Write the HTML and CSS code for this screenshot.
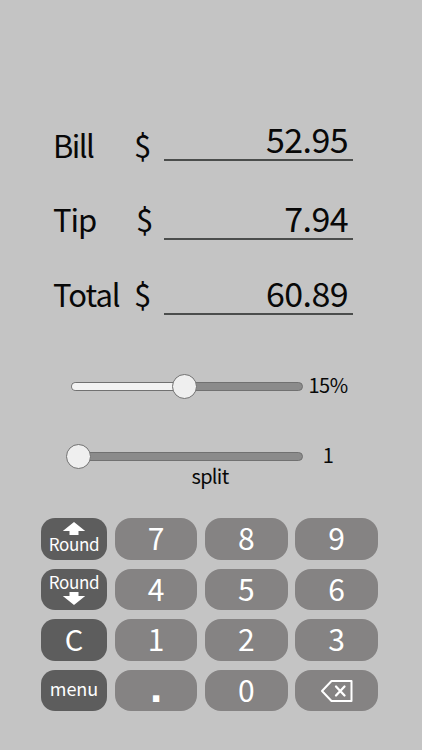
FILE: index.html
```html
<!DOCTYPE html>
<html lang="en">
<head>
  <meta charset="UTF-8">
  <meta name="viewport" content="width=device-width, initial-scale=1.0">
  <title>Tip Calculator</title>
  <link rel="stylesheet" href="styles.css">
</head>
<body>
  <div class="container">
    <div class="amounts">
      <div class="amount-row bill">
        <span class="label">Bill</span>
        <span class="currency">$</span>
        <span class="amount">52.95</span>
      </div>
      <div class="amount-row tip">
        <span class="label">Tip</span>
        <span class="currency">$</span>
        <span class="amount">7.94</span>
      </div>
      <div class="amount-row total">
        <span class="label">Total</span>
        <span class="currency">$</span>
        <span class="amount">60.89</span>
      </div>
    </div>

    <div class="sliders">
      <div class="slider-row">
        <div class="track">
          <div class="fill" style="width: 49%"></div>
          <div class="thumb" style="left: 49.3%"></div>
        </div>
        <span class="slider-value">15%</span>
      </div>
      <div class="slider-row">
        <div class="track">
          <div class="thumb" style="left: 3%"></div>
        </div>
        <span class="slider-value">1</span>
      </div>
      <div class="slider-label">split</div>
    </div>

    <div class="keypad">
      <button class="key dark round-up">
        <svg width="24" height="13" viewBox="0 0 24 13"><path d="M12 0L23.2 9H16.5V13H7.5V9H0.8Z" fill="#fff"/></svg>
        <span>Round</span>
      </button>
      <button class="key">7</button>
      <button class="key">8</button>
      <button class="key">9</button>

      <button class="key dark round-down">
        <span>Round</span>
        <svg width="24" height="13" viewBox="0 0 24 13"><path d="M12 13L23.2 4H16.5V0H7.5V4H0.8Z" fill="#fff"/></svg>
      </button>
      <button class="key">4</button>
      <button class="key">5</button>
      <button class="key">6</button>

      <button class="key dark clear">C</button>
      <button class="key">1</button>
      <button class="key">2</button>
      <button class="key">3</button>

      <button class="key dark menu">menu</button>
      <button class="key dot">.</button>
      <button class="key">0</button>
      <button class="key erase">
        <svg width="34" height="24" viewBox="0 0 34 24" fill="none" stroke="#fff" stroke-width="2" stroke-linejoin="round" stroke-linecap="round">
          <path d="M11.5 2H31.5V22H11.5L2 12Z"/>
          <path d="M16 7.5L24.5 16.5M24.5 7.5L16 16.5" stroke-width="2.3"/>
        </svg>
      </button>
    </div>
  </div>
</body>
</html>
```
FILE: styles.css
```css
* {
  margin: 0;
  padding: 0;
  box-sizing: border-box;
}

body {
  width: 422px;
  height: 750px;
  font-family: 'Noto Sans CJK SC', 'Noto Sans', sans-serif;
  background: #c4c4c4;
  color: #080808;
  overflow: hidden;
}

.container {
  height: 750px;
  padding-top: 115px;
  display: flex;
  flex-direction: column;
}

.amounts {
  height: 245px;
  padding-left: 53px;
}

.amount-row {
  display: flex;
  align-items: flex-end;
  height: 46px;
}

.amount-row.tip {
  margin-top: 33px;
}

.amount-row.total {
  margin-top: 29px;
}

.label,
.currency {
  margin-bottom: 1px;
  font-size: 31px;
  line-height: 40px;
  letter-spacing: -1px;
}

.bill .label,
.bill .currency {
  margin-bottom: -4px;
}

.label {
  width: 81px;
}

.bill .label {
  letter-spacing: -1.6px;
}

.currency {
  width: 30px;
}

.tip .currency {
  padding-left: 2px;
}

.amount {
  width: 189px;
  height: 46px;
  padding-right: 5px;
  border-bottom: 2px solid #4b4d4c;
  font-size: 34px;
  line-height: 48px;
  letter-spacing: -0.6px;
  text-align: right;
}

.sliders {
  height: 158px;
  padding: 11px 0 0 71px;
}

.slider-row {
  display: flex;
  align-items: center;
  height: 30px;
  margin-bottom: 40px;
}

.track {
  position: relative;
  width: 232px;
  height: 9px;
  background: #8b8b8b;
  border: 1px solid #717171;
  border-radius: 5px;
}

.fill {
  height: 7px;
  background: #f3f3f3;
  border-radius: 4px 0 0 4px;
}

.thumb {
  position: absolute;
  top: -9px;
  width: 25px;
  height: 25px;
  margin-left: -13px;
  background: #efefef;
  border: 1px solid #717171;
  border-radius: 50%;
}

.slider-value {
  width: 50px;
  padding-bottom: 3px;
  font-size: 20px;
  line-height: 30px;
  letter-spacing: -0.5px;
  text-align: center;
}

.slider-label {
  width: 278px;
  margin-top: -50px;
  font-size: 20px;
  line-height: 30px;
  letter-spacing: -0.7px;
  text-align: center;
}

.keypad {
  display: grid;
  grid-template-columns: 66px repeat(3, 82.5px);
  grid-auto-rows: 41.6px;
  gap: 9px 7.75px;
  padding-left: 41px;
}

.key {
  display: flex;
  align-items: center;
  justify-content: center;
  padding-bottom: 3px;
  background: #858383;
  border: none;
  border-radius: 16px;
  color: #fff;
  font-family: inherit;
  font-size: 30px;
  line-height: 38px;
}

.key.dark {
  background: #5d5d5d;
  border-radius: 14px;
}

.key.round-up,
.key.round-down {
  flex-direction: column;
  font-size: 17px;
  line-height: 18px;
  letter-spacing: -0.3px;
}

.key.round-up {
  padding-bottom: 2px;
}

.key.round-down {
  padding-bottom: 0;
}

.round-down span {
  margin-bottom: 1px;
}

.key.clear {
  font-size: 29px;
}

.key.menu {
  padding-bottom: 5px;
  font-size: 18px;
}

.key.dot {
  padding-bottom: 8px;
  font-family: 'Liberation Sans', sans-serif;
  font-size: 44px;
  font-weight: bold;
  line-height: 34px;
}

.key.erase {
  padding-bottom: 0;
}
```
